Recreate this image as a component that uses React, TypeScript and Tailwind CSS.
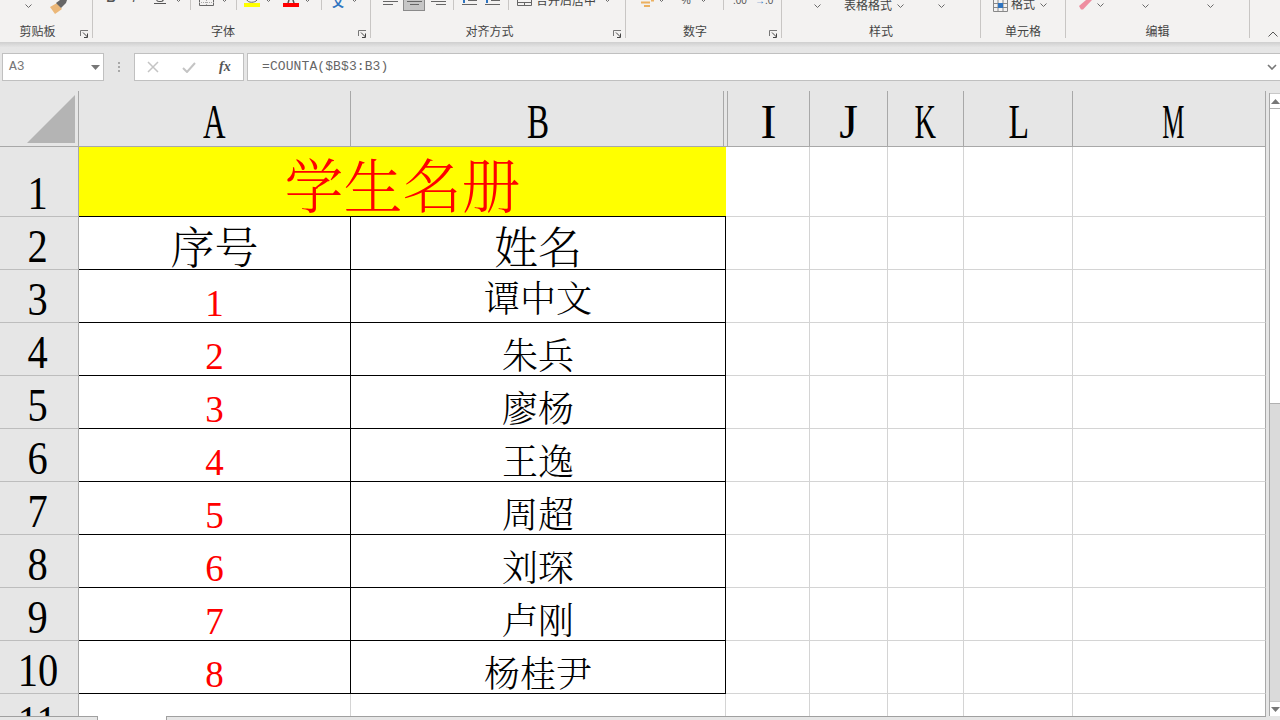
import React from "react";

const Chev = ({ c }: { c: string }) => (
  <svg width="7" height="4" viewBox="0 0 7 4" className={"shrink-0 " + c}>
    <path d="M0.5 0.5L3.5 3.5L6.5 0.5" fill="none" stroke="#6a6a6a" strokeWidth="1" />
  </svg>
);
const Sep = ({ c }: { c: string }) => <div className={"w-px h-[10px] shrink-0 bg-[#c8c6c4] " + c} />;
const Launcher = () => (
  <svg width="9" height="8" viewBox="0 0 9 8" className="shrink-0 mt-[6px] mr-[3px]">
    <path d="M0.5 6V0.5H8" fill="none" stroke="#777" />
    <path d="M3 2.5L7.5 7M7.5 3.5V7.5H4" fill="none" stroke="#444" />
  </svg>
);
const Lines = ({ c, kind }: { c: string; kind: number }) => (
  <svg width="15" height="6" viewBox="0 0 15 6" className={"shrink-0 " + c}>
    <path d={kind === 0 ? "M0 0.5H15M0 3.5H10" : kind === 1 ? "M0 0.5H15M3 3.5H12" : "M0 0.5H15M5 3.5H15"} stroke="#666" fill="none" />
  </svg>
);
const Indent = ({ c }: { c: string }) => (
  <svg width="15" height="6" viewBox="0 0 15 6" className={"shrink-0 " + c}>
    <path d="M6 0.5H15M0 4.5H15" stroke="#666" fill="none" />
    <path d="M2 0V3" stroke="#2f74c0" strokeWidth="2" fill="none" />
  </svg>
);

function Group({ w, label, launcher, children }: { w: string; label: string; launcher?: boolean; children: React.ReactNode }) {
  return (
    <div className={"flex flex-col h-[38px] border-r border-[#c8c6c4] shrink-0 " + w}>
      <div className="h-[24px] flex items-start overflow-hidden">{children}</div>
      <div className="h-[14px] flex items-start">
        <div className={"flex-1 text-center text-[12px] leading-[14px] text-[#444] font-['Noto_Sans_CJK_SC',sans-serif] " + (launcher ? "pr-[5px]" : "")}>{label}</div>
        {launcher && <Launcher />}
      </div>
    </div>
  );
}

const headerCols = [
  { t: "A", s: "scale-x-[0.65]", p: "" },
  { t: "B", s: "scale-x-[0.69]", p: "pl-[2px]" },
  { t: "", s: "", p: "" },
  { t: "I", s: "scale-x-100", p: "" },
  { t: "J", s: "scale-x-100", p: "" },
  { t: "K", s: "scale-x-[0.62]", p: "" },
  { t: "L", s: "scale-x-[0.7]", p: "pl-[2px]" },
  { t: "M", s: "scale-x-[0.52]", p: "pl-[8px]" },
];

const rowsData = [
  { n: "3", a: "1", b: "谭中文", pad: "pt-[2px]" },
  { n: "4", a: "2", b: "朱兵", pad: "pt-[9px]" },
  { n: "5", a: "3", b: "廖杨", pad: "pt-[9px]" },
  { n: "6", a: "4", b: "王逸", pad: "pt-[9px]" },
  { n: "7", a: "5", b: "周超", pad: "pt-[9px]" },
  { n: "8", a: "6", b: "刘琛", pad: "pt-[9px]" },
  { n: "9", a: "7", b: "卢刚", pad: "pt-[9px]" },
  { n: "10", a: "8", b: "杨桂尹", pad: "pt-[9px]" },
];

const bodyGrid = "grid grid-cols-[79px_272px_375px_84px_78px_76px_109px_193px] bg-white";
const Empty = () => (
  <>
    <div className="border-r border-b border-[#d4d4d4]" />
    <div className="border-r border-b border-[#d4d4d4]" />
    <div className="border-r border-b border-[#d4d4d4]" />
    <div className="border-r border-b border-[#d4d4d4]" />
    <div className="border-r border-b border-[#a8a8a8] border-b-[#d4d4d4]" />
  </>
);
const RowHead = ({ n }: { n: string }) => (
  <div className="bg-[#e6e6e6] border-r border-b border-r-[#a8a8a8] border-b-[#bdbdbd] flex items-end justify-center overflow-hidden pr-[3px]">
    <span className="inline-block translate-y-px scale-x-[0.88] text-[46px] leading-[46px] text-black font-['Liberation_Serif',serif]">{n}</span>
  </div>
);
const cjk = "font-['Noto_Serif_CJK_SC','Noto_Sans_CJK_SC',serif] font-light";

export default function App() {
  return (
    <div className="w-[1280px] h-[720px] overflow-hidden bg-[#e6e6e6] flex flex-col font-['Liberation_Sans','Noto_Sans_CJK_SC',sans-serif]">
      {/* Ribbon */}
      <div className="h-[42px] bg-[#f3f2f1] flex items-start shrink-0 text-[#555]">
        <Group w="w-[93px]" label="剪贴板" launcher>
          <Chev c="ml-[25px] mt-[4px]" />
          <svg width="17" height="15" viewBox="0 0 17 15" className="ml-[18px] shrink-0">
            <path d="M0 7L7 3L12 9L5 14Z" fill="#ebb778" />
            <path d="M6 3L10 0H17L16 3L11 8Z" fill="#666" />
          </svg>
        </Group>
        <Group w="w-[278px]" label="字体" launcher>
          <span className="ml-[13px] w-[10px] -mt-[9px] text-[13px] leading-[13px] font-bold text-center shrink-0 font-['Liberation_Sans',sans-serif]">B</span>
          <span className="ml-[14px] w-[8px] -mt-[9px] text-[13px] leading-[13px] italic text-center shrink-0 font-['Liberation_Sans',sans-serif]">I</span>
          <span className="ml-[16px] w-[12px] h-[5px] border-b border-[#555] -mt-px flex justify-center shrink-0 overflow-hidden">
            <span className="h-[3px] w-[8px] border-x border-b border-[#555] rounded-b-[3px]" />
          </span>
          <Chev c="ml-[9px] -mt-[2px]" />
          <Sep c="ml-[8px]" />
          <svg width="15" height="6" viewBox="0 0 15 6" className="ml-[8px] shrink-0">
            <path d="M0.5 0V5.5H14.5V0" fill="none" stroke="#666" />
            <path d="M7.5 0V5M0 2.5H15" stroke="#aaa" strokeDasharray="1 1" fill="none" />
          </svg>
          <Chev c="ml-[7px] -mt-[2px]" />
          <Sep c="ml-[8px]" />
          <div className="ml-[7px] w-[16px] shrink-0 flex flex-col items-center">
            <svg width="12" height="3" viewBox="0 0 12 3" className="shrink-0">
              <path d="M1 0C2 3 9 3 11 0" fill="none" stroke="#666" />
            </svg>
            <div className="w-[16px] h-[4px] bg-[#ffff00]" />
          </div>
          <Chev c="ml-[5px] -mt-[2px]" />
          <div className="ml-[11px] w-[16px] shrink-0 flex flex-col items-center">
            <svg width="10" height="3" viewBox="0 0 10 3" className="shrink-0">
              <path d="M2 3L3 0M8 3L7 0" fill="none" stroke="#555" strokeWidth="1.5" />
            </svg>
            <div className="w-[16px] h-[4px] bg-[#ff0000]" />
          </div>
          <Chev c="ml-[5px] -mt-[2px]" />
          <Sep c="ml-[10px]" />
          <span className="ml-[10px] w-[12px] -mt-[4px] text-[12px] leading-[12px] text-[#2f74c0] font-bold text-center shrink-0 font-['Noto_Sans_CJK_SC',sans-serif]">文</span>
          <Chev c="ml-[7px] -mt-[2px]" />
        </Group>
        <Group w="w-[255px]" label="对齐方式" launcher>
          <Lines c="ml-[12px] mt-[1px]" kind={0} />
          <div className="ml-[5px] w-[22px] h-[11px] shrink-0 bg-[#c6c6c6] border border-[#8a8a8a] border-t-0 flex justify-center pt-[1px]">
            <Lines c="" kind={1} />
          </div>
          <Lines c="ml-[6px] mt-[1px]" kind={2} />
          <Sep c="ml-[7px]" />
          <Indent c="ml-[8px]" />
          <Indent c="ml-[8px]" />
          <Sep c="ml-[8px]" />
          <svg width="15" height="6" viewBox="0 0 15 6" className="ml-[8px] shrink-0">
            <path d="M0.5 0V5.5H14.5V0M0 2.5H15M7.5 2.5V5" fill="none" stroke="#666" />
          </svg>
          <span className="ml-[4px] w-[60px] -mt-[6px] text-[12px] leading-[12px] text-[#444] shrink-0 whitespace-nowrap font-['Noto_Sans_CJK_SC',sans-serif]">合并后居中</span>
          <Chev c="ml-[8px] -mt-[2px]" />
        </Group>
        <Group w="w-[156px]" label="数字" launcher>
          <svg width="13" height="7" viewBox="0 0 13 7" className="ml-[15px] shrink-0">
            <path d="M0 2.5H9M3 6H9M10 0.5H13" stroke="#ebb060" strokeWidth="2" fill="none" />
          </svg>
          <Chev c="ml-[4px] -mt-[2px]" />
          <span className="ml-[15px] w-[12px] -mt-[5px] text-[11px] leading-[11px] text-center shrink-0">%</span>
          <Chev c="ml-[8px] -mt-[2px]" />
          <Sep c="ml-[16px]" />
          <span className="ml-[9px] w-[13px] -mt-[4px] text-[10px] leading-[10px] shrink-0">.00</span>
          <span className="ml-[9px] w-[17px] -mt-[4px] text-[10px] leading-[10px] shrink-0 whitespace-nowrap">
            <span className="text-[#2f74c0] font-bold">→</span>.0
          </span>
        </Group>
        <Group w="w-[199px]" label="样式">
          <Chev c="ml-[32px] mt-[4px]" />
          <span className="ml-[23px] w-[48px] -mt-px text-[12px] leading-[12px] text-[#444] shrink-0 whitespace-nowrap font-['Noto_Sans_CJK_SC',sans-serif]">表格格式</span>
          <Chev c="ml-[5px] mt-[4px]" />
          <Chev c="ml-[34px] mt-[4px]" />
        </Group>
        <Group w="w-[85px]" label="单元格">
          <svg width="15" height="12" viewBox="0 0 15 12" className="ml-[12px] shrink-0">
            <path d="M0.5 0V11.5H14.5V0M0 3.5H15M0 7.5H15M5 0V12M10 0V12" fill="none" stroke="#888" />
            <rect x="5" y="3" width="5" height="5" fill="#2f74c0" />
          </svg>
          <span className="ml-[3px] w-[24px] -mt-[2px] text-[12px] leading-[12px] text-[#444] shrink-0 whitespace-nowrap font-['Noto_Sans_CJK_SC',sans-serif]">格式</span>
          <Chev c="ml-[5px] mt-[3px]" />
        </Group>
        <Group w="w-[184px]" label="编辑">
          <svg width="13" height="10" viewBox="0 0 13 10" className="ml-[13px] shrink-0">
            <path d="M0 6L7 0H13L4 9.5H2Z" fill="#ee8ea0" />
          </svg>
          <Chev c="ml-[5px] mt-[3px]" />
          <Chev c="ml-[38px] mt-[4px]" />
          <Chev c="ml-[58px] mt-[4px]" />
        </Group>
        <div className="flex-1 h-[38px] flex items-end justify-end pr-[2px]">
          <svg width="10" height="6" viewBox="0 0 10 6" className="mb-px">
            <path d="M0.5 5.5L5 1L9.5 5.5" fill="none" stroke="#555" />
          </svg>
        </div>
      </div>
      <div className="h-[11px] shrink-0 bg-gradient-to-b from-[#cfcfcf] via-[#e6e6e6] to-[#e6e6e6]" />

      {/* Formula bar */}
      <div className="h-[28px] shrink-0 flex items-stretch text-[#666]">
        <div className="ml-[2px] w-[102px] bg-white border border-[#c0c0c0] flex items-center justify-between pl-[6px] pr-[3px]">
          <span className="text-[13px] font-['Liberation_Mono',monospace] text-[#777]">A3</span>
          <svg width="9" height="5" viewBox="0 0 9 5"><path d="M0 0H9L4.5 5Z" fill="#777" /></svg>
        </div>
        <div className="w-[30px] flex items-center justify-center">
          <div className="w-[2px] h-[10px] border-y-[2px] border-[#a8a8a8] flex items-center"><div className="w-[2px] h-[2px] bg-[#a8a8a8]" /></div>
        </div>
        <div className="w-[110px] bg-white border border-[#c0c0c0] flex items-center pl-[12px]">
          <svg width="12" height="12" viewBox="0 0 12 12" className="shrink-0">
            <path d="M1 1L11 11M11 1L1 11" stroke="#c4c4c4" strokeWidth="1.5" fill="none" />
          </svg>
          <svg width="14" height="11" viewBox="0 0 14 11" className="ml-[23px] shrink-0">
            <path d="M1 6L5 10L13 1" stroke="#c4c4c4" strokeWidth="2" fill="none" />
          </svg>
          <span className="ml-[23px] text-[14px] leading-[14px] italic font-bold text-[#555] font-['Liberation_Serif',serif]">fx</span>
        </div>
        <div className="ml-[3px] flex-1 bg-white border border-[#c0c0c0] border-r-0 flex items-center justify-between pl-[14px] pr-[3px]">
          <span className="text-[13px] tracking-[0.1px] font-['Liberation_Mono',monospace] text-[#666]">=COUNTA($B$3:B3)</span>
          <svg width="10" height="6" viewBox="0 0 10 6"><path d="M1 1L5 5L9 1" fill="none" stroke="#777" strokeWidth="1.6" /></svg>
        </div>
      </div>
      <div className="h-[10px] shrink-0" />

      {/* Sheet and scrollbar */}
      <div className="flex flex-1 min-h-0">
        <div className="w-[1266px] flex flex-col">
          <div className="h-[56px] shrink-0 grid grid-cols-[79px_272px_373px_4px_82px_78px_76px_109px_193px] bg-[#e6e6e6] border-b border-[#a8a8a8]">
            <div className="border-r border-[#a8a8a8] flex items-end justify-end pr-[3px] pb-[3px]">
              <svg width="48" height="48" viewBox="0 0 48 48"><path d="M48 0V48H0Z" fill="#b4b4b4" /></svg>
            </div>
            {headerCols.map((h, i) => (
              <div key={i} className={"border-r border-[#a8a8a8] flex items-end justify-center overflow-hidden " + h.p}>
                <span className={"inline-block text-[48px] leading-[48px] text-black font-['Liberation_Serif',serif] " + h.s}>{h.t}</span>
              </div>
            ))}
          </div>
          <div className={bodyGrid + " h-[70px] shrink-0"}>
            <RowHead n="1" />
            <div className={"col-span-2 bg-[#ffff00] border-b border-black flex items-center justify-center pt-[2px] text-[59px] leading-[59px] text-[#ff0000] " + cjk}>学生名册</div>
            <Empty />
          </div>
          <div className={bodyGrid + " h-[53px] shrink-0"}>
            <RowHead n="2" />
            <div className={"border-r border-b border-black flex items-center justify-center pt-[4px] text-[44px] leading-[44px] text-black " + cjk}>序号</div>
            <div className={"border-r border-b border-black flex items-center justify-center pt-[4px] text-[44px] leading-[44px] text-black " + cjk}>姓名</div>
            <Empty />
          </div>
          {rowsData.map((r) => (
            <div key={r.n} className={bodyGrid + " h-[53px] shrink-0"}>
              <RowHead n={r.n} />
              <div className="border-r border-b border-black flex items-end justify-center text-[37px] leading-[37px] text-[#ff0000] font-['Liberation_Serif',serif]">{r.a}</div>
              <div className={"border-r border-b border-black flex items-center justify-center text-[36px] leading-[36px] text-black " + cjk + " " + r.pad}>{r.b}</div>
              <Empty />
            </div>
          ))}
          <div className={bodyGrid + " h-[22px] shrink-0"}>
            <div className="bg-[#e6e6e6] border-r border-[#a8a8a8] flex items-start justify-center overflow-hidden pt-[6px] pr-[3px]">
              <span className="inline-block scale-x-[0.88] text-[46px] leading-[46px] text-black font-['Liberation_Serif',serif]">11</span>
            </div>
            <div className="border-r border-[#d4d4d4]" />
            <div className="border-r border-[#d4d4d4]" />
            <div className="border-r border-[#d4d4d4]" />
            <div className="border-r border-[#d4d4d4]" />
            <div className="border-r border-[#d4d4d4]" />
            <div className="border-r border-[#d4d4d4]" />
            <div className="border-r border-[#a8a8a8]" />
          </div>
          <div className="flex-1 flex">
            <div className="w-[98px] bg-[#e6e6e6] border-t border-r border-[#a0a0a0]" />
            <div className="w-[68px] bg-white" />
            <div className="flex-1 bg-[#e6e6e6] border-t border-l border-[#a0a0a0]" />
          </div>
        </div>
        <div className="w-[14px] pl-[3px] pt-[2px] pb-[4px] flex flex-col">
          <div className="flex-1 flex flex-col border-l border-[#a8a8a8]">
            <div className="h-[15px] bg-white border-t border-[#c8c8c8] flex items-center justify-center shrink-0">
              <svg width="9" height="5" viewBox="0 0 9 5"><path d="M0 5H9L4.5 0Z" fill="#777" /></svg>
            </div>
            <div className="h-[296px] bg-white border-t border-b border-[#b0b0b0] shrink-0" />
            <div className="flex-1 bg-[#dadada]" />
            <div className="h-[15px] bg-white border-t border-[#c8c8c8] flex items-center justify-center shrink-0">
              <svg width="9" height="5" viewBox="0 0 9 5"><path d="M0 0H9L4.5 5Z" fill="#777" /></svg>
            </div>
          </div>
        </div>
      </div>
    </div>
  );
}
